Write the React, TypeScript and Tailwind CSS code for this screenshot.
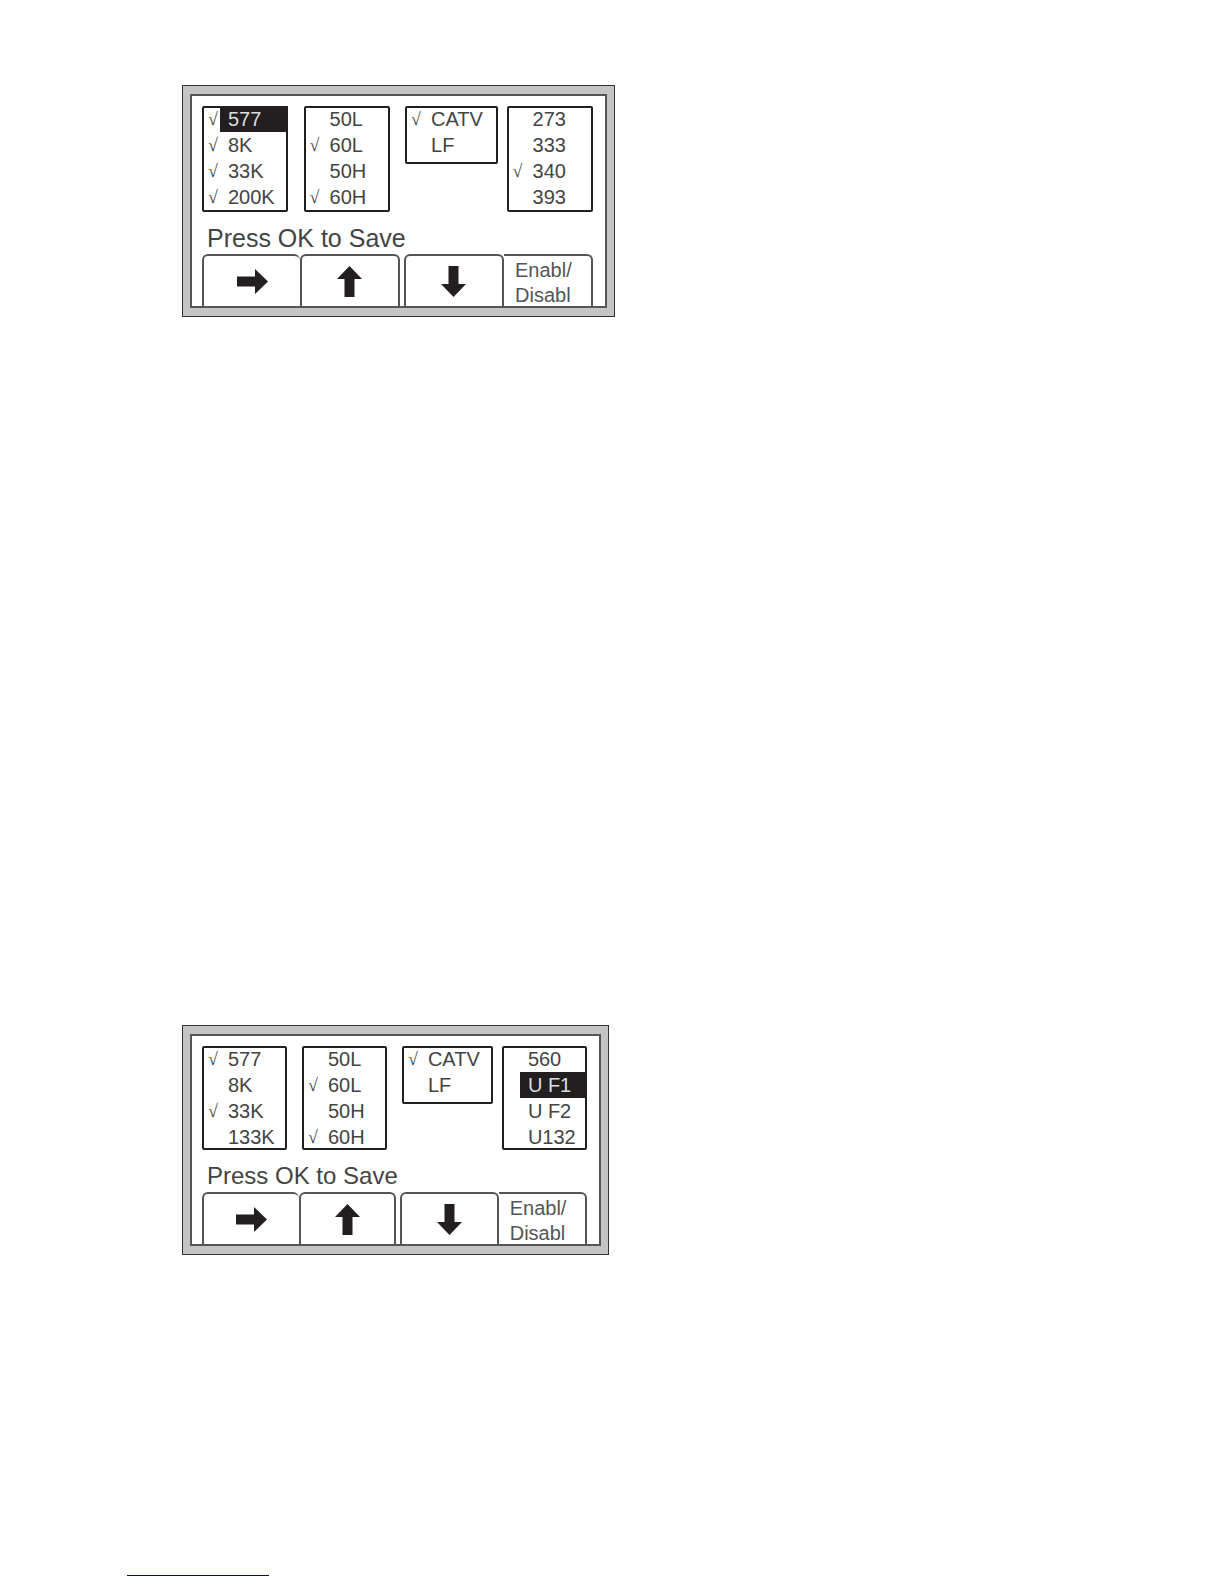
import React, {useState} from 'react';
import clsx from 'clsx';

type Option = {
    label: string;
    checked?: boolean;
    selected?: boolean;
};

type Screen = {
    id: string;
    frameClass: string;
    listClass: string;
    hintClass: string;
    lists: Option[][];
};

const SCREENS: Screen[] = [
    {
        id: 'first',
        frameClass: 'max-w-[433px]',
        listClass: 'pb-0.5',
        hintClass: 'text-[25px]',
        lists: [
            [
                {label: '577', checked: true, selected: true},
                {label: '8K', checked: true},
                {label: '33K', checked: true},
                {label: '200K', checked: true},
            ],
            [{label: '50L'}, {label: '60L', checked: true}, {label: '50H'}, {label: '60H', checked: true}],
            [{label: 'CATV', checked: true}, {label: 'LF'}],
            [{label: '273'}, {label: '333'}, {label: '340', checked: true}, {label: '393'}],
        ],
    },
    {
        id: 'second',
        frameClass: 'max-w-[427px]',
        listClass: 'pb-0',
        hintClass: 'text-[24px]',
        lists: [
            [{label: '577', checked: true}, {label: '8K'}, {label: '33K', checked: true}, {label: '133K'}],
            [{label: '50L'}, {label: '60L', checked: true}, {label: '50H'}, {label: '60H', checked: true}],
            [{label: 'CATV', checked: true}, {label: 'LF'}],
            [{label: '560'}, {label: 'U F1', selected: true}, {label: 'U F2'}, {label: 'U132'}],
        ],
    },
];

function OptionRow({id, option}: {id: string; option: Option}) {
    const [checked, setChecked] = useState(!!option.checked);

    return (
        <li>
            <label htmlFor={id} className="flex h-[26px] items-center">
                <input
                    id={id}
                    type="checkbox"
                    checked={checked}
                    onChange={(e) => setChecked(e.target.checked)}
                    className="w-0 appearance-none"
                />
                <span className="w-[18px] shrink-0 pl-1.5 font-['Liberation_Serif',serif] text-lg leading-none text-[#444]">
                    {checked && '√'}
                </span>
                <span
                    className={clsx(
                        'h-full flex-1 pl-2 text-xl leading-[26px] whitespace-nowrap',
                        option.selected ? 'bg-[#231f20] text-[#ddd]' : 'text-[#444]',
                    )}
                >
                    {option.label}
                </span>
            </label>
        </li>
    );
}

// Arrow pointing right, up or down
function Arrow({dir}: {dir: 'right' | 'up' | 'down'}) {
    if (dir === 'right') {
        return (
            <svg width="31" height="25" viewBox="0 0 31 25" fill="#231f20" aria-hidden="true">
                <path d="M0 7.5H18V0L31 12.5L18 25V17.5H0Z"/>
            </svg>
        );
    }
    return (
        <svg width="25" height="31" viewBox="0 0 25 31" fill="#231f20" aria-hidden="true">
            {dir === 'up'
                ? <path d="M7.5 31V13H0L12.5 0L25 13H17.5V31Z"/>
                : <path d="M7.5 0V18H0L12.5 31L25 18H17.5V0Z"/>}
        </svg>
    );
}

function DeviceScreen({screen}: {screen: Screen}) {
    const key = 'flex h-13 justify-center border-[#555]';

    return (
        <section className={clsx('w-full border border-[#333] bg-[#c4c4c4] px-[7px] py-2', screen.frameClass)}>
            <div className="border-2 border-[#555] bg-white pt-2.5 pr-3 pl-2.5">
                <div className="grid grid-cols-[86fr_15fr_86fr_15fr_92fr_9fr_86fr] items-start">
                    {screen.lists.map((options, i) => (
                        <React.Fragment key={i}>
                            {i > 0 && <span/>}
                            <ul
                                className={clsx(
                                    'rounded-xs outline-2 -outline-offset-2 outline-[#231f20]',
                                    options.length < 4 ? 'pb-1.5' : screen.listClass,
                                )}
                            >
                                {options.map((option) => (
                                    <OptionRow key={option.label} id={`${screen.id}-${option.label}`} option={option}/>
                                ))}
                            </ul>
                        </React.Fragment>
                    ))}
                </div>

                <p className={clsx('mt-2.5 pl-[5px] leading-8 whitespace-nowrap text-[#444]', screen.hintClass)}>
                    Press OK to Save
                </p>

                <div className="grid grid-cols-[98fr_99fr_4fr_100fr_89fr]">
                    <button type="button" aria-label="Right" className={clsx(key, 'items-center rounded-t-md border-t-2 border-l-2')}>
                        <Arrow dir="right"/>
                    </button>
                    <button type="button" aria-label="Up" className={clsx(key, 'items-center rounded-t-md border-x-2 border-t-2')}>
                        <Arrow dir="up"/>
                    </button>
                    <span/>
                    <button type="button" aria-label="Down" className={clsx(key, 'items-center rounded-t-md border-x-2 border-t-2')}>
                        <Arrow dir="down"/>
                    </button>
                    <button type="button" className={clsx(key, 'items-start rounded-tr-md border-t-2 border-r-2 pt-0.5 pr-2 text-left text-xl leading-[25px] text-[#555]')}>
                        Enabl/<br/>Disabl
                    </button>
                </div>
            </div>
        </section>
    );
}

export default function App() {
    return (
        <main className="min-h-screen bg-white px-[127px] pt-[85px] pb-2 font-['Liberation_Sans',Arial,sans-serif]">
            <div className="flex flex-col gap-[708px] pl-[55px]">
                {SCREENS.map((screen) => (
                    <DeviceScreen key={screen.id} screen={screen}/>
                ))}
            </div>
            <hr className="mt-80 h-px w-[142px] border-0 bg-[#000080]"/>
        </main>
    );
}
